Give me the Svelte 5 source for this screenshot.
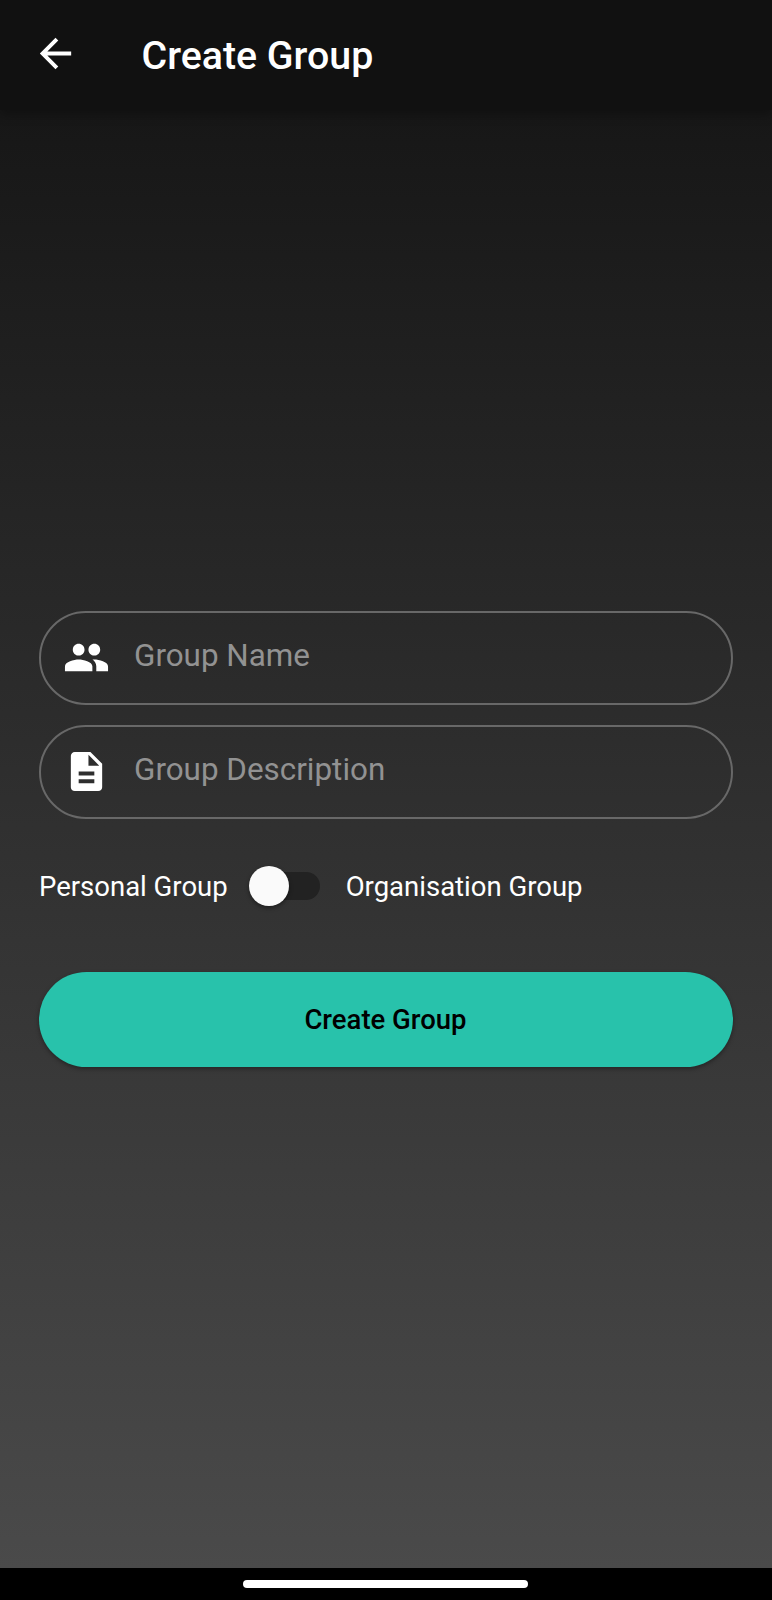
<script>
  let organisation = $state(false);

  const fields = [
    {
      label: 'Group Name',
      icon: 'M16 11c1.66 0 2.99-1.34 2.99-3S17.66 5 16 5c-1.66 0-3 1.34-3 3s1.34 3 3 3zm-8 0c1.66 0 2.99-1.34 2.99-3S9.66 5 8 5C6.34 5 5 6.34 5 8s1.34 3 3 3zm0 2c-2.33 0-7 1.17-7 3.5V19h14v-2.5c0-2.33-4.67-3.5-7-3.5zm8 0c-.29 0-.62.02-.97.05 1.16.84 1.97 1.97 1.97 3.45V19h6v-2.5c0-2.33-4.67-3.5-7-3.5z'
    },
    {
      label: 'Group Description',
      icon: 'M14 2H6c-1.1 0-1.99.9-1.99 2L4 20c0 1.1.89 2 1.99 2H18c1.1 0 2-.9 2-2V8l-6-6zm2 16H8v-2h8v2zm0-4H8v-2h8v2zm-3-5V3.5L18.5 9H13z'
    }
  ];
</script>

<div class="screen">
  <header>
    <svg viewBox="0 0 24 24" aria-hidden="true">
      <path d="M20 11H7.83l5.59-5.59L12 4l-8 8 8 8 1.41-1.41L7.83 13H20v-2z" />
    </svg>
    <h1>Create Group</h1>
  </header>

  <main>
    {#each fields as field}
      <div class="field">
        <svg viewBox="0 0 24 24" aria-hidden="true"><path d={field.icon} /></svg>
        <span>{field.label}</span>
      </div>
    {/each}

    <div class="choice">
      <span class="personal">Personal Group</span>
      <button
        class="switch"
        class:on={organisation}
        role="switch"
        aria-checked={organisation}
        aria-label="Organisation group"
        onclick={() => (organisation = !organisation)}
      ><i></i></button>
      <span class="organisation">Organisation Group</span>
    </div>

    <button class="submit"><span>Create Group</span></button>
  </main>

  <footer><div class="handle"></div></footer>
</div>

<style>
  :global(body) {
    margin: 0;
    background: #000;
  }

  .screen {
    height: 1600px;
    display: flex;
    flex-direction: column;
    box-sizing: border-box;
    font-family: Roboto, sans-serif;
    color: #fff;
    background: linear-gradient(#131313, #4a4a4a 1568px);
  }

  svg {
    width: 47px;
    height: 47px;
    fill: #fff;
    flex: none;
  }

  header {
    height: 110px;
    box-sizing: border-box;
    display: flex;
    align-items: center;
    padding: 0 31.5px 3px;
    background: #111;
    box-shadow: 0 5px 10px rgba(0, 0, 0, 0.28);
  }

  h1 {
    margin: 4px 0 0 63px;
    font-size: 39.3px;
    line-height: 46px;
    font-weight: 500;
    white-space: nowrap;
  }

  main {
    flex: 1;
    display: flex;
    flex-direction: column;
    padding: 501px 39px 0;
  }

  .field {
    height: 94px;
    box-sizing: border-box;
    display: flex;
    align-items: center;
    padding: 0 22px;
    border: 2px solid #686868;
    border-radius: 47px;
    margin-bottom: 20px;
  }

  .field svg {
    margin-bottom: 1px;
  }

  .field span {
    margin: 0 0 4px 24px;
    font-size: 31.4px;
    line-height: 38px;
    color: #929292;
    white-space: nowrap;
  }

  .choice {
    height: 54px;
    margin-top: 20px;
    display: flex;
    align-items: center;
    font-size: 27.5px;
    line-height: 32px;
    white-space: nowrap;
  }

  .choice span {
    margin-top: 2px;
  }

  .switch {
    width: 71px;
    height: 28px;
    margin: 0 25.5px 0 21.5px;
    padding: 0;
    display: flex;
    align-items: center;
    border: 0;
    border-radius: 14px;
    background: #222;
  }

  .switch i {
    width: 40px;
    height: 40px;
    flex: none;
    border-radius: 50%;
    background: #fafafa;
    box-shadow: 0 2px 4px rgba(0, 0, 0, 0.4);
  }

  .on i {
    margin-left: auto;
  }

  .submit {
    height: 95px;
    margin-top: 59px;
    padding: 1px 1px 0 0;
    border: 0;
    border-radius: 48px;
    background: #28c2ab;
    box-shadow: 0 2px 4px rgba(0, 0, 0, 0.35);
    font: 500 27.5px/32px Roboto, sans-serif;
    color: #000;
  }

  footer {
    height: 32px;
    display: flex;
    justify-content: center;
    background: #000;
  }

  .handle {
    width: 285px;
    height: 8px;
    margin: 12px 1px 0 0;
    border-radius: 4px;
    background: #fff;
  }
</style>
